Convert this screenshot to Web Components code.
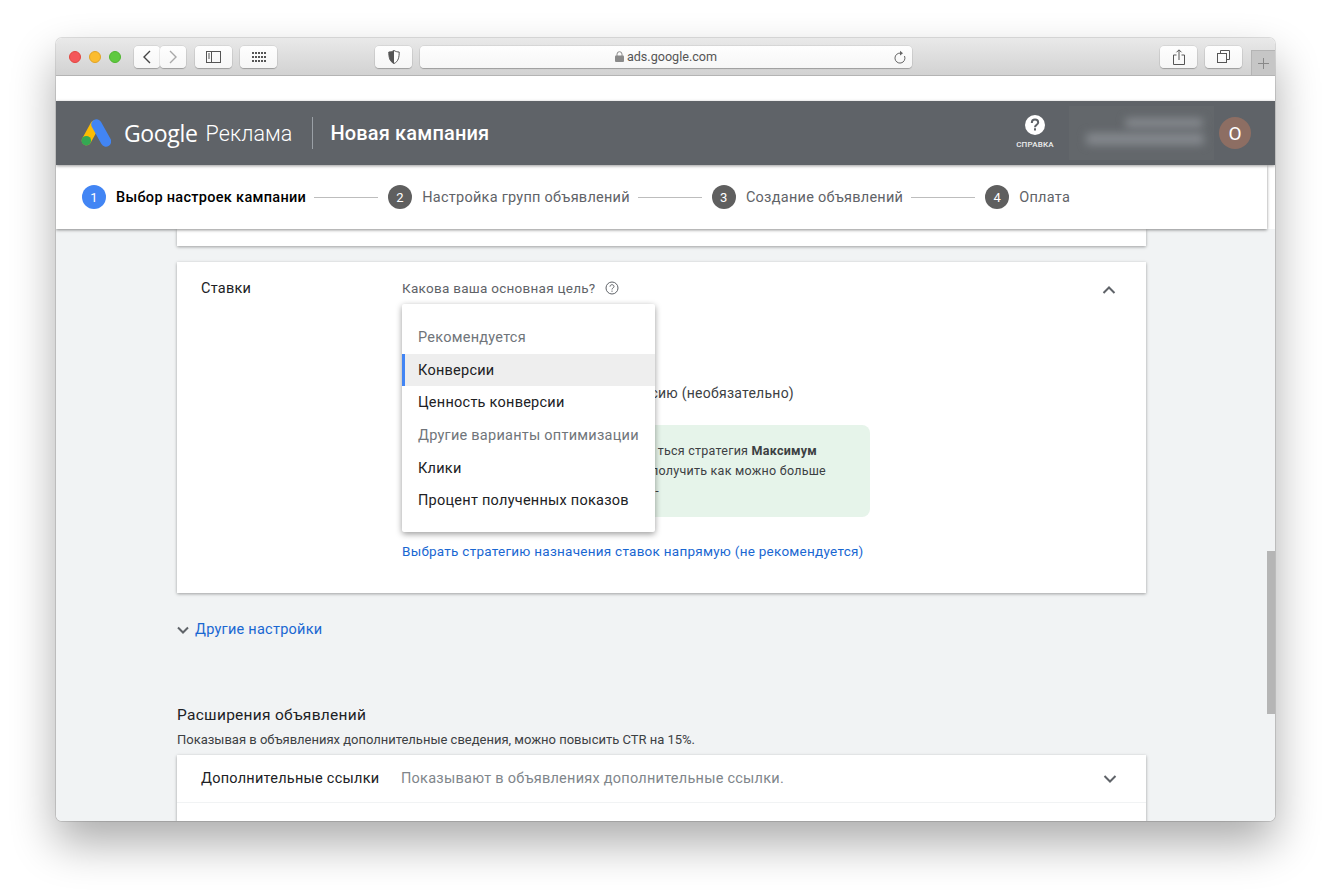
<!DOCTYPE html>
<html lang="ru">
<head>
<meta charset="utf-8">
<title>Новая кампания</title>
<style>
    html, body { margin: 0; background: #fff; }
    body { font-family: Roboto, "Liberation Sans", sans-serif; height: 895px; overflow: hidden; }
</style>
</head>
<body>
<browser-window>
    <browser-toolbar slot="toolbar"></browser-toolbar>
    <ads-header></ads-header>
    <step-bar>
        <step-item num="1" active>Выбор настроек кампании</step-item>
        <step-item num="2">Настройка групп объявлений</step-item>
        <step-item num="3">Создание объявлений</step-item>
        <step-item num="4" last>Оплата</step-item>
    </step-bar>
    <campaign-page></campaign-page>
</browser-window>

<script>
class BrowserWindow extends HTMLElement {
    constructor() {
        super()
        this.attachShadow({ mode: 'open' })
        this.shadowRoot.innerHTML = `
            <style>
                :host {
                    display: flex;
                    flex-direction: column;
                    box-sizing: border-box;
                    width: 1219px;
                    height: 783px;
                    margin: 38px 0 0 56px;
                    border-radius: 6px;
                    overflow: hidden;
                    background: #fff;
                    box-shadow: 0 0 0 1px rgba(0,0,0,.12), 0 22px 45px rgba(0,0,0,.33);
                }
            </style>
            <slot name="toolbar"></slot>
            <slot></slot>
        `
    }
}

class ToolButton extends HTMLElement {
    constructor() {
        super()
        this.attachShadow({ mode: 'open' })
        this.shadowRoot.innerHTML = `
            <style>
                :host {
                    display: flex;
                    align-items: center;
                    justify-content: center;
                    box-sizing: border-box;
                    width: 37px;
                    height: 22px;
                    background: linear-gradient(#fefefe, #f6f6f6);
                    border-radius: 4px;
                    box-shadow: 0 0 0 .5px rgba(0,0,0,.12), 0 1px 1px rgba(0,0,0,.22);
                    flex: none;
                }
            </style>
            <slot></slot>
        `
    }
}

class BrowserToolbar extends HTMLElement {
    constructor() {
        super()
        this.attachShadow({ mode: 'open' })
        this.shadowRoot.innerHTML = `
            <style>
                :host {
                    display: flex;
                    position: relative;
                    align-items: center;
                    box-sizing: border-box;
                    height: 38px;
                    flex: none;
                    padding: 0 0 0 13px;
                    background: linear-gradient(#e9e9e9, #d2d2d2);
                    border-bottom: 1px solid #b4b4b4;
                }
                .dot { width: 12px; height: 12px; border-radius: 50%; margin-right: 8px; box-sizing: border-box; }
                .red { background: #f4575a; border: 1px solid #e2463f; }
                .yellow { background: #fbbc2f; border: 1px solid #e1a325; }
                .green { background: #5fc93f; border: 1px solid #4fb52f; }
                .back { margin-left: 13px; width: 26px; }
                .fwd { width: 26px; margin-left: 0; }
                .side { margin-left: 9px; }
                .grid { margin-left: 8px; }
                .shield { margin-left: 98px; }
                .url {
                    margin-left: 8px;
                    width: 492px;
                    position: relative;
                    font: 12.6px Roboto, sans-serif;
                    color: #555;
                    gap: 3px;
                }
                .reload { position: absolute; right: 5px; top: 4px; }
                .share { margin-left: 248px; }
                .tabs { margin-left: 8px; }
                .plus {
                    position: absolute;
                    right: 0;
                    bottom: 0;
                    width: 24px;
                    height: 25px;
                    box-sizing: border-box;
                    background: #c6c6c6;
                    border-left: 1px solid #b4b4b4;
                    border-top: 1px solid #b4b4b4;
                    display: flex;
                    align-items: center;
                    justify-content: center;
                }
            </style>
            <span class="dot red"></span><span class="dot yellow"></span><span class="dot green" style="margin-right:0"></span>
            <tool-button class="back">
                <svg width="10" height="16" viewBox="0 0 10 16" fill="none" stroke="#444" stroke-width="1.4"><path d="M8 2 2 8l6 6"/></svg>
            </tool-button>
            <tool-button class="fwd">
                <svg width="10" height="16" viewBox="0 0 10 16" fill="none" stroke="#a8a8a8" stroke-width="1.4"><path d="m2 2 6 6-6 6"/></svg>
            </tool-button>
            <tool-button class="side">
                <svg width="15" height="12" viewBox="0 0 15 12" fill="none" stroke="#555"><rect x=".5" y=".5" width="14" height="11"/><path d="M5.500 1v10M2 3h2M2 5h2M2 7h2"/></svg>
            </tool-button>
            <tool-button class="grid">
                <svg width="14" height="10" viewBox="0 0 14 10" fill="#555">
                    <path d="M0 0h2v2H0zM3 0h2v2H3zM6 0h2v2H6zM9 0h2v2H9zM12 0h2v2h-2zM0 4h2v2H0zM3 4h2v2H3zM6 4h2v2H6zM9 4h2v2H9zM12 4h2v2h-2zM0 8h2v2H0zM3 8h2v2H3zM6 8h2v2H6zM9 8h2v2H9zM12 8h2v2h-2z"/>
                </svg>
            </tool-button>
            <tool-button class="shield">
                <svg width="12" height="14" viewBox="0 0 12 14"><path d="M6 .5C4.500 1.500 2.500 2 .8 2c0 5 .7 9.500 5.200 11.500 4.500-2 5.200-6.500 5.200-11.500C9.500 2 7.500 1.500 6 .5Z" fill="#fff" stroke="#555"/><path d="M6 .5C4.500 1.500 2.500 2 .8 2c0 5 .7 9.500 5.200 11.500Z" fill="#555"/></svg>
            </tool-button>
            <tool-button class="url">
                <svg width="9" height="11" viewBox="0 0 9 11"><path d="M2 5V3.200a2.500 2.500 0 0 1 5 0V5" fill="none" stroke="#8a8a8a"/><rect y="4.500" width="9" height="6.500" rx="1" fill="#8a8a8a"/></svg>
                <span>ads.google.com</span>
                <svg class="reload" width="14" height="15" viewBox="0 0 14 15" fill="none" stroke="#666"><path d="M11.500 6a5 5 0 1 1-3.500-2.800"/><path d="M7 .8 10 3.200 7 5.600" fill="#666" stroke="none"/></svg>
            </tool-button>
            <tool-button class="share">
                <svg width="12" height="16" viewBox="0 0 12 16" fill="none" stroke="#555"><path d="M3.500 6H.5v9.500h11V6h-3M6 11V1M3.500 3.300 6 .8l2.500 2.500"/></svg>
            </tool-button>
            <tool-button class="tabs">
                <svg width="13" height="13" viewBox="0 0 13 13" fill="none" stroke="#555"><rect x=".5" y="3.500" width="9" height="9"/><path d="M3.500 3V.5h9v9H10"/></svg>
            </tool-button>
            <div class="plus">
                <svg width="11" height="11" viewBox="0 0 11 11" stroke="#888"><path d="M5.500 0v11M0 5.500h11"/></svg>
            </div>
        `
    }
}

class AdsHeader extends HTMLElement {
    constructor() {
        super()
        this.attachShadow({ mode: 'open' })
        this.shadowRoot.innerHTML = `
            <style>
                :host {
                    display: flex;
                    align-items: center;
                    flex: none;
                    position: relative;
                    z-index: 3;
                    box-sizing: border-box;
                    height: 64px;
                    margin-top: 25px;
                    padding-left: 25px;
                    background: #5f6368;
                    color: #fff;
                    box-shadow: 0 1px 3px rgba(0,0,0,.4);
                }
                .brand { font: 400 23px "Open Sans", Roboto, sans-serif; margin-left: 13px; letter-spacing: -.35px; }
                .product { font: 300 21.5px Roboto, sans-serif; margin-left: 8px; letter-spacing: .1px; }
                .divider { width: 1px; height: 32px; background: #9aa0a6; margin: 0 17px 0 20px; }
                .title { font: 500 20px Roboto, sans-serif; letter-spacing: .15px; flex: 1; }
                .help { display: flex; flex-direction: column; align-items: center; width: 60px; margin: -2px 4px 0 0; }
                .help span { font: 500 8px Roboto, sans-serif; margin-top: 5px; letter-spacing: .2px; color: #eee; }
                .account {
                    width: 145px;
                    height: 54px;
                    background: #63676b;
                    position: relative;
                    overflow: hidden;
                }
                .smear { position: absolute; background: #84888d; filter: blur(4px); border-radius: 4px; }
                .avatar {
                    width: 32px;
                    height: 32px;
                    border-radius: 50%;
                    background: #8d6e63;
                    margin: 0 24px 0 5px;
                    display: flex;
                    align-items: center;
                    justify-content: center;
                    font: 400 19px Roboto, sans-serif;
                }
            </style>
            <svg width="30" height="28" viewBox="0 0 30 28" fill="none" stroke-linecap="round">
                <path d="M14 6 5.500 21.500" stroke="#fbbc04" stroke-width="9.500"/>
                <path d="M15.500 5.500 25 22.500" stroke="#4285f4" stroke-width="10.500"/>
                <circle cx="5.300" cy="21.700" r="4.800" fill="#34a853"/>
            </svg>
            <span class="brand">Google</span>
            <span class="product">Реклама</span>
            <span class="divider"></span>
            <span class="title">Новая кампания</span>
            <div class="help">
                <svg width="20" height="20" viewBox="0 0 20 20" fill="none"><circle cx="10" cy="10" r="10" fill="#fff"/><path d="M6.800 8C6.800 5.800 8.300 4.600 10 4.600s3.200 1.200 3.200 3c0 2.100-3.200 2.400-3.200 4.700M10 13.300v2.300" stroke="#5f6368" stroke-width="2"/></svg>
                <span>СПРАВКА</span>
            </div>
            <div class="account">
                <div class="smear" style="left:56px;top:12px;width:78px;height:10px"></div>
                <div class="smear" style="left:17px;top:27px;width:118px;height:12px"></div>
            </div>
            <div class="avatar">О</div>
        `
    }
}

class StepBar extends HTMLElement {
    constructor() {
        super()
        this.attachShadow({ mode: 'open' })
        this.shadowRoot.innerHTML = `
            <style>
                :host {
                    display: flex;
                    align-items: center;
                    flex: none;
                    position: relative;
                    z-index: 2;
                    box-sizing: border-box;
                    width: 1211px;
                    height: 64px;
                    padding-left: 26px;
                    background: #fff;
                    box-shadow: 0 1px 3px rgba(0,0,0,.45);
                }
            </style>
            <slot></slot>
        `
    }
}

class StepItem extends HTMLElement {
    constructor() {
        super()
        const active = this.hasAttribute('active')
        this.attachShadow({ mode: 'open' })
        this.shadowRoot.innerHTML = `
            <style>
                :host { display: flex; align-items: center; font: ${active ? 500 : 400} 14.5px Roboto, sans-serif; letter-spacing: ${active ? '.3px' : '.26px'}; color: ${active ? '#000' : '#5f6368'}; }
                .num {
                    width: 24px;
                    height: 24px;
                    border-radius: 50%;
                    background: ${active ? '#4285f4' : '#5f5f5f'};
                    color: #fff;
                    font: 400 13px Roboto, sans-serif;
                    display: flex;
                    align-items: center;
                    justify-content: center;
                    margin-right: 10px;
                }
                .line { width: 64px; height: 1px; background: #bdbdbd; margin: 0 10px 0 8px; }
            </style>
            <span class="num">${this.getAttribute('num')}</span>
            <slot></slot>
            ${this.hasAttribute('last') ? '' : '<span class="line"></span>'}
        `
    }
}

class GoalMenu extends HTMLElement {
    constructor() {
        super()
        this.attachShadow({ mode: 'open' })
        this.shadowRoot.innerHTML = `
            <style>
                :host {
                    position: absolute;
                    left: 0;
                    top: 26px;
                    z-index: 5;
                    width: 253px;
                    box-sizing: border-box;
                    padding: 17px 0 16px;
                    background: #fff;
                    border-radius: 2px;
                    box-shadow: 0 2px 6px rgba(0,0,0,.4);
                    font: 400 14.5px/34px Roboto, sans-serif;
                    letter-spacing: .25px;
                    color: #202124;
                }
                div { padding-left: 16px; height: 32px; white-space: nowrap; }
                .tall { height: 33px; }
                .low { line-height: 36px; }
                .head { color: #70757a; }
                .sel { background: #eee; border-left: 3px solid #4285f4; padding-left: 13px; }
            </style>
            <div class="head tall">Рекомендуется</div>
            <div class="sel">Конверсии</div>
            <div>Ценность конверсии</div>
            <div class="head tall low">Другие варианты оптимизации</div>
            <div class="tall low">Клики</div>
            <div>Процент полученных показов</div>
        `
    }
}

class AdsCard extends HTMLElement {
    constructor() {
        super()
        this.attachShadow({ mode: 'open' })
        this.shadowRoot.innerHTML = `
            <style>
                :host {
                    display: flex;
                    position: relative;
                    width: 969px;
                    box-sizing: border-box;
                    background: #fff;
                    box-shadow: 0 1px 3px rgba(0,0,0,.35);
                }
            </style>
            <slot></slot>
        `
    }
}

class CampaignPage extends HTMLElement {
    constructor() {
        super()
        this.attachShadow({ mode: 'open' })
        this.shadowRoot.innerHTML = `
            <style>
                :host {
                    display: block;
                    position: relative;
                    flex: 1;
                    min-height: 0;
                    overflow: hidden;
                    padding-left: 121px;
                    background: #f1f3f4;
                    font: 400 14.5px/20px Roboto, sans-serif;
                    letter-spacing: .25px;
                    color: #202124;
                }
                .stub { height: 17px; }
                .bids { margin-top: 16px; padding: 16px 0 32px 24px; }
                .label { width: 201px; flex: none; padding-top: 1px; }
                .body { position: relative; width: 600px; }
                .muted { color: #5f6368; }
                .goal { display: flex; align-items: center; gap: 9px; font-size: 13.5px; letter-spacing: .27px; }
                .cost { margin-top: 85px; width: 392px; text-align: right; color: #3c4043; font-size: 14px; }
                .tip {
                    margin-top: 22px;
                    width: 468px;
                    height: 92px;
                    box-sizing: border-box;
                    padding-top: 16px;
                    background: #e6f4ea;
                    border-radius: 8px;
                    font-size: 12.5px;
                    color: #3c4043;
                    text-align: right;
                }
                .tip b { font-weight: 700; }
                .tip div { white-space: nowrap; }
                a { color: #1967d2; text-decoration: none; }
                .direct { display: block; margin-top: 24px; font-size: 13.5px; letter-spacing: .26px; }
                .chev { position: absolute; left: 925px; }
                .more { display: flex; align-items: center; gap: 6px; margin-top: 27px; }
                .ext-title { margin-top: 65px; font-size: 15.5px; color: #202124; letter-spacing: .28px; line-height: 21px; }
                .ext-sub { margin-top: 4px; font-size: 13px; color: #3c4043; letter-spacing: -.01px; }
                .ext { margin-top: 5px; flex-direction: column; height: 80px; }
                .ext-row { display: flex; align-items: center; height: 48px; box-sizing: border-box; padding: 1px 0 0 24px; border-bottom: 1px solid #f1f3f4; position: relative; }
                .ext-row span { width: 200px; }
                .ext-row i { font-style: normal; color: #80868b; }
                .scroll { position: absolute; right: 0; top: 322px; width: 8px; height: 163px; background: #b5b5b5; }
            </style>
            <ads-card class="stub"></ads-card>
            <ads-card class="bids">
                <div class="label">Ставки</div>
                <div class="body">
                    <div class="goal muted">
                        <span>Какова ваша основная цель?</span>
                        <svg width="14" height="14" viewBox="0 0 14 14" fill="none" stroke="#5f6368"><circle cx="7" cy="7" r="6"/><path d="M5 5.600C5 4.500 5.900 3.700 7 3.700s2 .8 2 1.800c0 1.400-2 1.500-2 3"/><path d="M7 9.600v1.200"/></svg>
                    </div>
                    <goal-menu></goal-menu>
                    <div class="cost">сию (необязательно)</div>
                    <div class="tip">
                        <div style="padding-right:53px">ться стратегия <b>Максимум</b></div>
                        <div style="padding-right:44px">получить как можно больше</div>
                        <div style="padding-right:211px">-</div>
                    </div>
                    <a class="direct" href="#">Выбрать стратегию назначения ставок напрямую (не рекомендуется)</a>
                </div>
                <svg class="chev" style="top:23px" width="14" height="10" viewBox="0 0 14 10" fill="none" stroke="#5f6368" stroke-width="2"><path d="m1.500 8 5.500-5.500L12.500 8"/></svg>
            </ads-card>
            <div class="more">
                <svg width="12" height="8" viewBox="0 0 12 8" fill="none" stroke="#5f6368" stroke-width="2"><path d="m1 1.500 5 5 5-5"/></svg>
                <a href="#">Другие настройки</a>
            </div>
            <div class="ext-title">Расширения объявлений</div>
            <div class="ext-sub">Показывая в объявлениях дополнительные сведения, можно повысить CTR на 15%.</div>
            <ads-card class="ext">
                <div class="ext-row">
                    <span>Дополнительные ссылки</span>
                    <i>Показывают в объявлениях дополнительные ссылки.</i>
                    <svg class="chev" style="top:19px;left:926px" width="14" height="10" viewBox="0 0 14 10" fill="none" stroke="#5f6368" stroke-width="2"><path d="m1.500 2 5.500 5.500L12.500 2"/></svg>
                </div>
            </ads-card>
            <div class="scroll"></div>
        `
    }
}

customElements.define('tool-button', ToolButton)
customElements.define('browser-toolbar', BrowserToolbar)
customElements.define('browser-window', BrowserWindow)
customElements.define('ads-header', AdsHeader)
customElements.define('step-bar', StepBar)
customElements.define('step-item', StepItem)
customElements.define('goal-menu', GoalMenu)
customElements.define('ads-card', AdsCard)
customElements.define('campaign-page', CampaignPage)
</script>
</body>
</html>
